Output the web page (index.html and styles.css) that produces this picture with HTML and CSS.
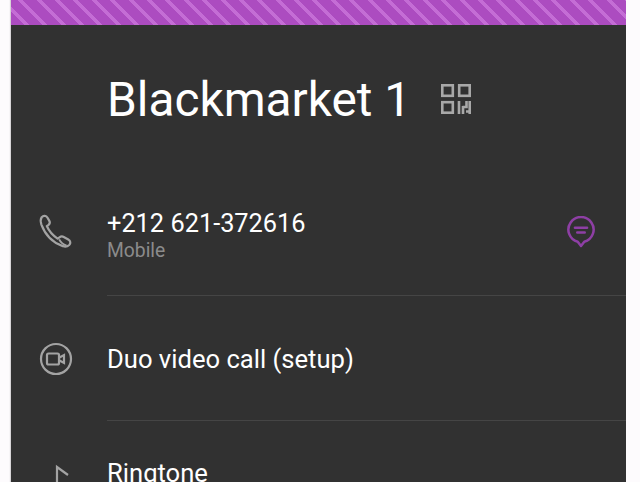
FILE: index.html
```html
<!DOCTYPE html>
<html>
  <head>
    <meta charset="utf-8" />
    <title>Blackmarket 1</title>
    <link rel="stylesheet" href="styles.css">
  </head>
  <body class="page">
    <div class="sheet">
      <div class="stripes"></div>

      <div class="title-row">
        <h1 class="title">Blackmarket 1</h1>
        <svg class="qr-icon" width="30" height="30" viewBox="0 0 30 30" fill="none" stroke="#a8a8a8" stroke-width="2.600">
          <rect x="1.300" y="1.300" width="10.500" height="10.500" />
          <rect x="18.200" y="1.300" width="10.500" height="10.500" />
          <rect x="1.300" y="18.200" width="10.500" height="10.500" />
          <path d="M18 17v13M22 22v8M25.500 17v6h-4M28.700 17v13M25 27.500h4" />
        </svg>
      </div>

      <div class="row row-phone">
        <div class="row-icon">
          <svg width="36" height="36" viewBox="0 0 34 34" fill="none" stroke="#a3a3a3" stroke-width="2.100" stroke-linejoin="round">
            <path d="M3.500 3c1.600-1.800 4.300-1.500 5.500.5l1.700 3c.8 1.400.5 2.700-.7 3.700l-1.700 1.200c2 4.500 5.500 8.800 10.200 11.900l1.800-1.300c1.300-.9 2.700-1 4-.3l4.300 2.400c2.200 1.200 2.500 3.700.9 5.200-1.600 1.400-3.800 1.900-6.100 1-9.300-3.200-16.500-10.500-20.200-20.300-.9-2.700-.9-5.100.3-7z" />
            <path d="M20 24c1.300 2.700 3.700 4.700 7 5.800" stroke-width="1.800" />
          </svg>
        </div>
        <div class="row-body">
          <div class="row-text">
            <div class="row-main row-number">+212 621-372616</div>
            <div class="row-sub">Mobile</div>
          </div>
          <svg class="msg-icon" width="28" height="32" viewBox="0 0 30 34" fill="none" stroke="#8e3fa5" stroke-width="2.700" stroke-linecap="round" stroke-linejoin="round">
            <path d="M18.500 27.500A13.500 13.500 0 1 0 11.500 27.500L15 32z" />
            <path d="M8.500 12.500h13M11 17.500h8" />
          </svg>
        </div>
      </div>

      <div class="row row-duo">
        <div class="row-icon">
          <svg width="34" height="34" viewBox="0 0 34 34" fill="none" stroke="#a3a3a3" stroke-width="2.200">
            <circle cx="17" cy="17" r="15" />
            <rect x="8" y="11.500" width="12" height="11" rx="1.500" />
            <path d="M20.500 15.500l4.500-2.500v8l-4.500-2.500" />
          </svg>
        </div>
        <div class="row-body">
          <div class="row-main">Duo video call (setup)</div>
        </div>
      </div>

      <div class="row row-ringtone">
        <div class="row-icon">
          <svg width="34" height="34" viewBox="0 0 34 34" fill="none" stroke="#a3a3a3" stroke-width="2.200">
            <path d="M18 34V9l11 8" />
          </svg>
        </div>
        <div class="row-body">
          <div class="row-main">Ringtone</div>
        </div>
      </div>
    </div>
  </body>
</html>
```

FILE: styles.css
```css
html,
body {
  height: 100%;
}

.page {
  margin: 0;
  overflow: hidden;
  background: #fdfbfd;
  font-family: Roboto, "Liberation Sans", sans-serif;
}

.sheet {
  width: 615px;
  height: 482px;
  margin-left: 11px;
  overflow: hidden;
  background: #313131;
  box-shadow: -1px 0 1px rgba(0, 0, 0, 0.15);
}

.stripes {
  height: 25px;
  background: repeating-linear-gradient(
    45deg,
    #ac4cc0 0,
    #ac4cc0 9.500px,
    #c46dd5 9.500px,
    #c46dd5 13px
  );
}

.title-row {
  display: flex;
  align-items: center;
  height: 150px;
  padding-left: 96px;
}

.title {
  margin: 0;
  font-size: 47.800px;
  font-weight: 400;
  color: #fff;
}

.qr-icon {
  margin: -2px 0 0 30px;
}

.row {
  display: flex;
}

.row-icon {
  display: flex;
  flex: none;
  justify-content: center;
  width: 96px;
  padding-right: 6px;
  box-sizing: border-box;
}

.row-body {
  display: flex;
  flex: 1;
  justify-content: space-between;
  border-bottom: 1px solid #454545;
}

.row-main {
  font-size: 25.600px;
  line-height: 30px;
  color: #fff;
}

.row-number {
  font-size: 25.350px;
}

.row-sub {
  margin-top: 1px;
  font-size: 19.300px;
  line-height: 24px;
  color: #8b8b8b;
}

.row-phone {
  height: 121px;
  box-sizing: border-box;
}

.row-phone .row-icon {
  padding-top: 39px;
}

.row-phone .row-body {
  padding-top: 33px;
}

.msg-icon {
  margin: 8px 31px 0 0;
}

.row-duo {
  height: 125px;
  box-sizing: border-box;
}

.row-duo .row-icon {
  padding-top: 46px;
}

.row-duo .row-body {
  padding-top: 48px;
}

.row-ringtone .row-icon {
  padding-top: 37px;
}

.row-ringtone .row-body {
  padding-top: 37px;
  border-bottom: 0;
}
```
